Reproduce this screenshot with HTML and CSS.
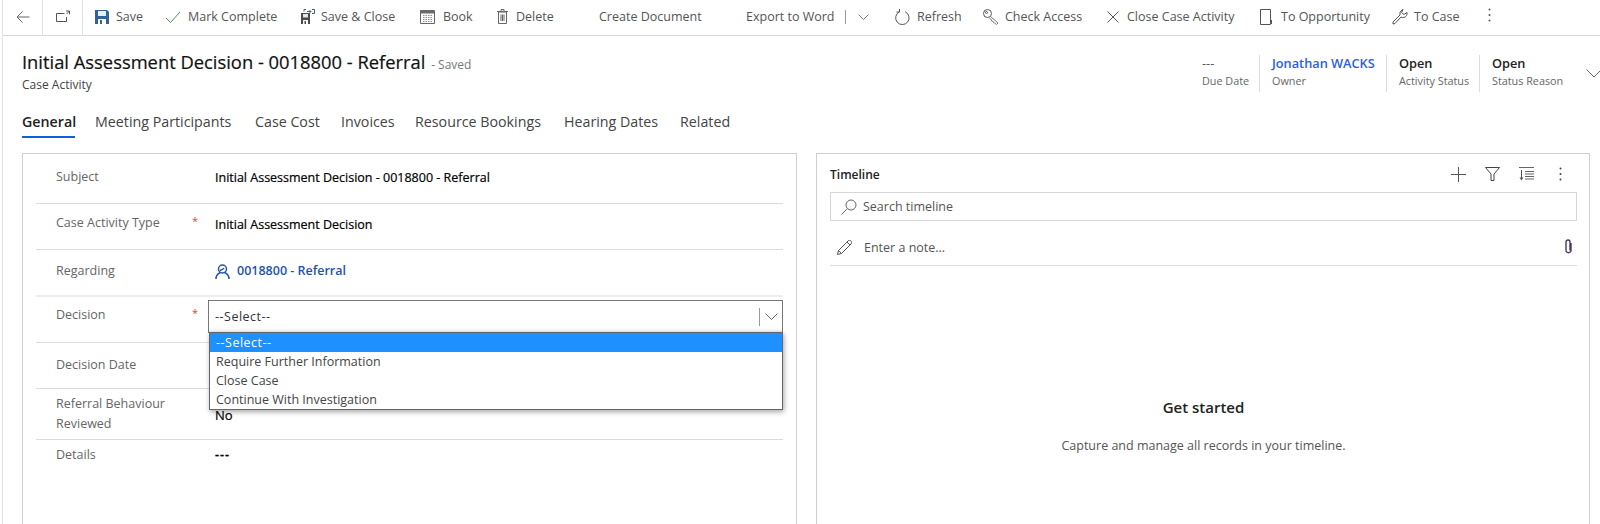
FILE: index.html
```html
<!DOCTYPE html>
<html lang="en">
<head>
<meta charset="UTF-8">
<meta name="viewport" content="width=device-width, initial-scale=1.0">
<title>Initial Assessment Decision - 0018800 - Referral</title>
<link rel="stylesheet" href="styles.css">
</head>
<body>
<div class="app">

    <div class="toolbar">
        <div class="nav-btn nav-back">
            <svg width="14" height="14" viewBox="0 0 14 14"><path d="M13.5 7H1M6.5 1.5 1 7l5.5 5.5" fill="none" stroke="#666"/></svg>
        </div>
        <div class="nav-btn nav-popout">
            <svg width="14" height="14" viewBox="0 0 14 14"><path d="M8.5 3.5H.5v8h10V7M10 1h3.5v3.5M13.5 1 10.5 4" fill="none" stroke="#555"/></svg>
        </div>

        <div class="cmd cmd-save">
            <svg width="14" height="14" viewBox="0 0 14 14"><path d="M0 0h12l2 2v12H0z" fill="#33619a"/><path d="M3 1h8v5H3z" fill="#e8eef5"/><path d="M3 9h8v5H3z" fill="#fff"/><path d="M5 10h2v4H5z" fill="#33619a"/></svg>
            <span>Save</span>
        </div>
        <div class="cmd cmd-complete">
            <svg width="16" height="14" viewBox="0 0 16 14"><path d="M1 8l4.5 4.5L15 2" fill="none" stroke="#3f9c5c"/></svg>
            <span>Mark Complete</span>
        </div>
        <div class="cmd cmd-saveclose">
            <svg width="14" height="15" viewBox="0 0 14 15"><path d="M0 4h9v11H0z" fill="#4a4a4a"/><path d="M2 5h5v3.500H2z" fill="#e6e6e6"/><path d="M2 11h5v4H2z" fill="#fff"/><path d="M3.500 12h1.500v3H3.500z" fill="#4a4a4a"/><path d="M3 2.500V.5h2M11 .5h2.500v4H11M6 2.500h4M8.500 1l1.500 1.500L8.500 4" fill="none" stroke="#33619a"/></svg>
            <span>Save &amp; Close</span>
        </div>
        <div class="cmd cmd-book">
            <svg width="15" height="15" viewBox="0 0 15 15"><path d="M.5 1.500h14v13H.5z" fill="#fff" stroke="#666"/><path d="M.5 1.500h14v3H.5z" fill="#6a6a6a"/><path d="M3 6.500h9M3 8.500h9M3 10.500h9M3 12.500h9" stroke="#8a8fa0" stroke-dasharray="1.500 1"/></svg>
            <span>Book</span>
        </div>
        <div class="cmd cmd-delete">
            <svg width="11" height="15" viewBox="0 0 11 15"><path d="M1.500 3h8v11.500h-8zM0 2.500h11M4 2.500V.5h3v2M4 5.500v6.500M7 5.500v6.500M5.500 5.500v6.500" fill="none" stroke="#666"/></svg>
            <span>Delete</span>
        </div>
        <div class="cmd cmd-document"><span>Create Document</span></div>
        <div class="cmd cmd-word">
            <span>Export to Word</span>
            <i class="split"></i>
            <svg width="11" height="6" viewBox="0 0 11 6"><path d="M.5.500l5 5 5-5" fill="none" stroke="#777"/></svg>
        </div>
        <div class="cmd cmd-refresh">
            <svg width="15" height="16" viewBox="0 0 15 16"><path d="M4.500 2.800A6.700 6.700 0 1 0 10 2.700M4.500 0v3H1.500" fill="none" stroke="#555"/></svg>
            <span>Refresh</span>
        </div>
        <div class="cmd cmd-access">
            <svg width="16" height="16" viewBox="0 0 16 16"><circle cx="4.500" cy="4.500" r="4" fill="none" stroke="#555"/><circle cx="3.500" cy="3.500" r="1" fill="none" stroke="#555"/><path d="M7.500 7.500l7.500 6.500-1.500 1.500-2-1.500-1-.2-.3-1.300-1.700-.5-.2-1.500-2-1.200" fill="none" stroke="#777"/></svg>
            <span>Check Access</span>
        </div>
        <div class="cmd cmd-close">
            <svg width="12" height="12" viewBox="0 0 12 12"><path d="M.5.500l11 11M11.500.500l-11 11" fill="none" stroke="#555"/></svg>
            <span>Close Case Activity</span>
        </div>
        <div class="cmd cmd-opportunity">
            <svg width="12" height="16" viewBox="0 0 12 16"><path d="M.5.500h10v15H.5zM11.500 11v4" fill="none" stroke="#555"/></svg>
            <span>To Opportunity</span>
        </div>
        <div class="cmd cmd-case">
            <svg width="16" height="16" viewBox="0 0 16 16"><path d="M1 13l7-7a4.500 4.500 0 0 1 2-5l1-.5-1.500 3 2.500 2 3-2c.5 2-.5 4-3 5-1 .3-2 0-3-.5l-6 6.500-2 .5z" fill="none" stroke="#555"/></svg>
            <span>To Case</span>
        </div>
        <div class="cmd-more">
            <svg width="3" height="14" viewBox="0 0 3 14"><circle cx="1.500" cy="1.500" r="1" fill="#555"/><circle cx="1.500" cy="7" r="1" fill="#555"/><circle cx="1.500" cy="12.500" r="1" fill="#555"/></svg>
        </div>
    </div>

    <div class="record-header">
        <div class="record-title">
            <h1>Initial Assessment Decision - 0018800 - Referral <small>- Saved</small></h1>
            <div class="record-type">Case Activity</div>
        </div>
        <div class="summary">
            <div class="summary-item due">
                <div class="summary-value muted">---</div>
                <div class="summary-label">Due Date</div>
            </div>
            <div class="summary-item owner">
                <div class="summary-value link">Jonathan WACKS</div>
                <div class="summary-label">Owner</div>
            </div>
            <div class="summary-item status">
                <div class="summary-value">Open</div>
                <div class="summary-label">Activity Status</div>
            </div>
            <div class="summary-item reason">
                <div class="summary-value">Open</div>
                <div class="summary-label">Status Reason</div>
            </div>
            <svg class="summary-chevron" width="16" height="9" viewBox="0 0 16 9"><path d="M.5.500l7.500 7.500L15.500.500" fill="none" stroke="#666"/></svg>
        </div>
    </div>

    <div class="tabs">
        <div class="tab tab-general active">General</div>
        <div class="tab tab-meeting">Meeting Participants</div>
        <div class="tab tab-cost">Case Cost</div>
        <div class="tab tab-invoices">Invoices</div>
        <div class="tab tab-bookings">Resource Bookings</div>
        <div class="tab tab-hearing">Hearing Dates</div>
        <div class="tab tab-related">Related</div>
    </div>

    <div class="columns">
        <div class="card form-card">
            <div class="row row-subject">
                <div class="row-label">Subject</div>
                <div class="row-req"></div>
                <div class="row-value">Initial Assessment Decision - 0018800 - Referral</div>
            </div>
            <div class="row row-type">
                <div class="row-label">Case Activity Type</div>
                <div class="row-req">*</div>
                <div class="row-value">Initial Assessment Decision</div>
            </div>
            <div class="row row-regarding">
                <div class="row-label">Regarding</div>
                <div class="row-req"></div>
                <div class="row-value row-link">
                    <svg width="15" height="15" viewBox="0 0 15 15"><circle cx="7.500" cy="5" r="4" fill="none" stroke="#2156ae" stroke-width="1.500"/><path d="M5 6.500c1.500-.5 3.500-1.500 4-2.500M1 15c0-3.500 2-5.500 4.500-6.500M14 15c0-3.500-2-5.500-4.500-6.500" fill="none" stroke="#2156ae" stroke-width="1.500"/></svg>
                    <span>0018800 - Referral</span>
                </div>
            </div>
            <div class="row row-decision">
                <div class="row-label">Decision</div>
                <div class="row-req">*</div>
                <div class="select-wrap">
                    <div class="select-box">
                        <span>--Select--</span>
                        <i class="select-split"></i>
                        <svg width="13" height="7" viewBox="0 0 13 7"><path d="M.5.500l6 6 6-6" fill="none" stroke="#666"/></svg>
                    </div>
                    <div class="select-list">
                        <div class="option selected">--Select--</div>
                        <div class="option">Require Further Information</div>
                        <div class="option">Close Case</div>
                        <div class="option">Continue With Investigation</div>
                    </div>
                </div>
            </div>
            <div class="row row-date">
                <div class="row-label">Decision Date</div>
                <div class="row-req"></div>
                <div class="row-value"></div>
            </div>
            <div class="row row-reviewed">
                <div class="row-label">Referral Behaviour Reviewed</div>
                <div class="row-req"></div>
                <div class="row-value value-no">No</div>
            </div>
            <div class="row row-details">
                <div class="row-label">Details</div>
                <div class="row-req"></div>
                <div class="row-value value-dash">---</div>
            </div>
        </div>

        <div class="card timeline-card">
            <div class="timeline-head">
                <div class="timeline-title">Timeline</div>
                <div class="timeline-actions">
                    <svg width="15" height="15" viewBox="0 0 15 15"><path d="M0 7.500h15M7.500 0v15" fill="none" stroke="#555"/></svg>
                    <svg width="15" height="14" viewBox="0 0 15 14"><path d="M.5.500h14L9 7v6.500H6V7z" fill="none" stroke="#444"/></svg>
                    <svg width="15" height="14" viewBox="0 0 15 14"><path d="M0 .5h15M6 4.500h9M6 7h9M6 9.500h9M6 12h9" fill="none" stroke="#666"/><path d="M2.500 3v9" stroke="#555"/><path d="M.5 10.500l2 3 2-3z" fill="#555"/></svg>
                    <svg class="timeline-more" width="3" height="14" viewBox="0 0 3 14"><circle cx="1.500" cy="1.500" r="1" fill="#444"/><circle cx="1.500" cy="7" r="1" fill="#444"/><circle cx="1.500" cy="12.500" r="1" fill="#444"/></svg>
                </div>
            </div>
            <div class="timeline-search">
                <svg width="16" height="16" viewBox="0 0 16 16"><circle cx="10" cy="6" r="5" fill="none" stroke="#666"/><path d="M6.500 9.500.5 15.500" fill="none" stroke="#666"/></svg>
                <span>Search timeline</span>
            </div>
            <div class="timeline-note">
                <svg width="15" height="15" viewBox="0 0 15 15"><path d="M.5 14.500l1-4L11 1c1-1 2-.8 3 0s.8 2 0 3l-9.500 9.500zM1.500 10.500l3 3M10 2l3 3" fill="none" stroke="#555"/></svg>
                <span>Enter a note...</span>
                <svg class="clip" width="9" height="16" viewBox="0 0 9 16"><path d="M7 4v8a2.700 2.700 0 0 1-5 0V3a2 2 0 0 1 4 0v8.500" fill="none" stroke="#4a3a5a" stroke-width="1.400"/></svg>
            </div>
            <div class="timeline-empty">
                <div class="empty-title">Get started</div>
                <div class="empty-text">Capture and manage all records in your timeline.</div>
            </div>
        </div>
    </div>

</div>
</body>
</html>
```

FILE: styles.css
```css
html, body {
    margin: 0;
    padding: 0;
    height: 524px;
    overflow: hidden;
    background: #fff;
}
body {
    font-family: "Open Sans", "Noto Sans", Arial, sans-serif;
    font-size: 12.5px;
    color: #333;
}
.app {
    margin-left: 2px;
    height: 524px;
    border-left: 1px solid #e2e2e2;
}

/* command bar */
.toolbar {
    box-sizing: border-box;
    display: flex;
    align-items: center;
    height: 36px;
    padding-bottom: 2px;
    border-bottom: 1px solid #d8d8d8;
    color: #555;
    white-space: nowrap;
}
.nav-btn {
    display: flex;
    align-items: center;
    justify-content: center;
    height: 35px;
    margin-bottom: -2px;
    padding-bottom: 2px;
    box-sizing: border-box;
    border-right: 1px solid #e2e2e2;
}
.nav-back { width: 40px; }
.nav-popout { width: 40px; }
.cmd {
    display: flex;
    align-items: center;
    gap: 7px;
    flex: none;
}
.cmd-save { margin-left: 12px; width: 70px; }
.cmd-complete { width: 136px; }
.cmd-saveclose { width: 119px; gap: 6px; }
.cmd-book { width: 77px; gap: 8px; }
.cmd-delete { width: 102px; gap: 8px; }
.cmd-document { width: 147px; }
.cmd-word { width: 149px; gap: 0; }
.cmd-refresh { width: 88px; }
.cmd-access { width: 124px; gap: 6px; }
.cmd-close { width: 153px; gap: 8px; }
.cmd-opportunity { width: 132px; gap: 9px; }
.cmd-case { width: 96px; gap: 6px; }
.split {
    width: 1px;
    height: 14px;
    background: #999;
    margin: 0 12px 0 10px;
}

/* record header */
.record-header {
    display: flex;
    justify-content: space-between;
    height: 65px;
}
.record-title {
    padding: 13px 0 0 19px;
}
h1 {
    margin: 0;
    font-size: 18.35px;
    font-weight: 500;
    line-height: 26px;
    color: #111;
    -webkit-text-stroke: .2px #111;
}
h1 small {
    font-size: 12px;
    font-weight: 400;
    line-height: 1;
    color: #777;
    margin-left: 1px;
    -webkit-text-stroke: 0;
}
.record-type {
    line-height: 20px;
    font-size: 12px;
    color: #444;
}
.summary {
    display: flex;
    align-items: flex-start;
    padding-top: 19px;
    margin-right: -2px;
}
.summary-item {
    box-sizing: border-box;
    height: 37px;
    padding-left: 12px;
    border-left: 1px solid #ddd;
}
.due { width: 57px; border-left: 0; padding-left: 0; }
.owner { width: 127px; }
.status { width: 93px; }
.reason { width: 107px; }
.summary-value {
    font-size: 12.75px;
    font-weight: 600;
    line-height: 17px;
    color: #222;
}
.summary-value.muted { font-weight: 400; color: #555; }
.summary-value.link { color: #2a60e8; }
.summary-label {
    font-size: 10.8px;
    line-height: 18px;
    color: #666;
}
.summary-chevron {
    margin-top: 14px;
}

/* tabs */
.tabs {
    display: flex;
    height: 37px;
    padding-left: 19px;
    font-size: 14.25px;
    color: #444;
}
.tab {
    box-sizing: border-box;
    height: 37px;
    line-height: 20px;
    padding-top: 11px;
    white-space: nowrap;
    flex: none;
}
.tab.active {
    color: #222;
    font-weight: 600;
    border-bottom: 2px solid #1160d8;
}
.tab-general { width: 53px; margin-right: 20px; }
.tab-meeting { width: 160px; }
.tab-cost { width: 86px; }
.tab-invoices { width: 74px; }
.tab-bookings { width: 149px; }
.tab-hearing { width: 116px; }
.tab-related { width: 60px; }

/* two cards */
.columns {
    display: grid;
    grid-template-columns: 775px 774px;
    column-gap: 19px;
    margin: 15px 0 0 19px;
}
.card {
    box-sizing: border-box;
    height: 380px;
    border: 1px solid #cfcfcf;
    border-bottom: 0;
}
.form-card {
    padding: 0 13px;
}
.row {
    display: grid;
    grid-template-columns: 136px 23px 1fr;
    padding-left: 20px;
    box-sizing: border-box;
    border-bottom: 1px solid #dcdcdc;
    line-height: 20px;
}
.row-label { color: #666; }
.row-req { color: #e0413a; font-size: 11px; line-height: 16px; }
.row-value { color: #000; font-weight: 500; -webkit-text-stroke: .2px #000; }
.row-subject { height: 50px; padding-top: 13px; }
.row-subject .row-value { padding-top: 1px; }
.row-type { height: 46px; padding-top: 9px; }
.row-type .row-value { padding-top: 2px; }
.row-regarding { height: 47px; padding-top: 11px; border-bottom: 2px solid #eee; }
.row-decision { height: 46px; padding-top: 8px; }
.row-date { height: 46px; padding-top: 12px; }
.row-reviewed { height: 51px; padding-top: 5px; }
.row-details { height: 40px; padding-top: 5px; border-bottom: 0; }
.row-link {
    display: flex;
    align-items: center;
    gap: 7px;
    color: #1f53a8;
    font-weight: 600;
    height: 20px;
    -webkit-text-stroke: 0;
}
.value-no { padding-top: 11px; font-size: 13px; }
.value-dash { letter-spacing: 1px; font-weight: 600; }

/* decision select and its open list */
.select-wrap {
    position: relative;
    margin: -5px 0 0 -7px;
}
.select-box {
    box-sizing: border-box;
    display: flex;
    align-items: center;
    height: 33px;
    padding: 0 4px 0 6px;
    border: 1px solid #777;
    color: #333;
    box-shadow: inset 0 -4px 4px -4px rgba(0,0,0,.15);
}
.select-box span { flex: 1; letter-spacing: .5px; }
.select-split {
    width: 1px;
    height: 18px;
    background: #999;
    margin-right: 5px;
}
.select-list {
    position: absolute;
    top: 32px;
    left: 1px;
    right: 0;
    z-index: 2;
    box-sizing: border-box;
    height: 78px;
    background: #fff;
    border: 1px solid #666;
    box-shadow: 1px 2px 5px rgba(0,0,0,.35);
}
.option {
    height: 19px;
    line-height: 19px;
    padding-left: 6px;
    color: #444;
}
.option.selected {
    background: #1e90ff;
    color: #fff;
    letter-spacing: .5px;
}

/* timeline */
.timeline-card {
    padding: 0 12px 0 13px;
}
.timeline-head {
    box-sizing: border-box;
    display: flex;
    justify-content: space-between;
    align-items: center;
    height: 38px;
    padding-top: 2px;
}
.timeline-title {
    font-weight: 600;
    font-size: 12px;
    color: #222;
}
.timeline-actions {
    display: flex;
    align-items: center;
    gap: 19px;
}
.timeline-more { margin: 0 15px 0 6px; }
.timeline-search {
    box-sizing: border-box;
    display: flex;
    align-items: center;
    gap: 6px;
    height: 29px;
    padding-left: 10px;
    border: 1px solid #d6d6d6;
    color: #555;
}
.timeline-note {
    box-sizing: border-box;
    display: flex;
    align-items: center;
    height: 45px;
    padding: 8px 0 0 7px;
    border-bottom: 1px solid #dcdcdc;
    color: #555;
}
.timeline-note span {
    flex: 1;
    margin-left: 12px;
}
.clip { margin-right: 4px; }
.timeline-empty {
    padding-top: 129px;
    text-align: center;
}
.empty-title {
    font-size: 15px;
    font-weight: 600;
    line-height: 24px;
    color: #222;
}
.empty-text {
    margin-top: 18px;
    line-height: 18px;
    color: #555;
}
```
